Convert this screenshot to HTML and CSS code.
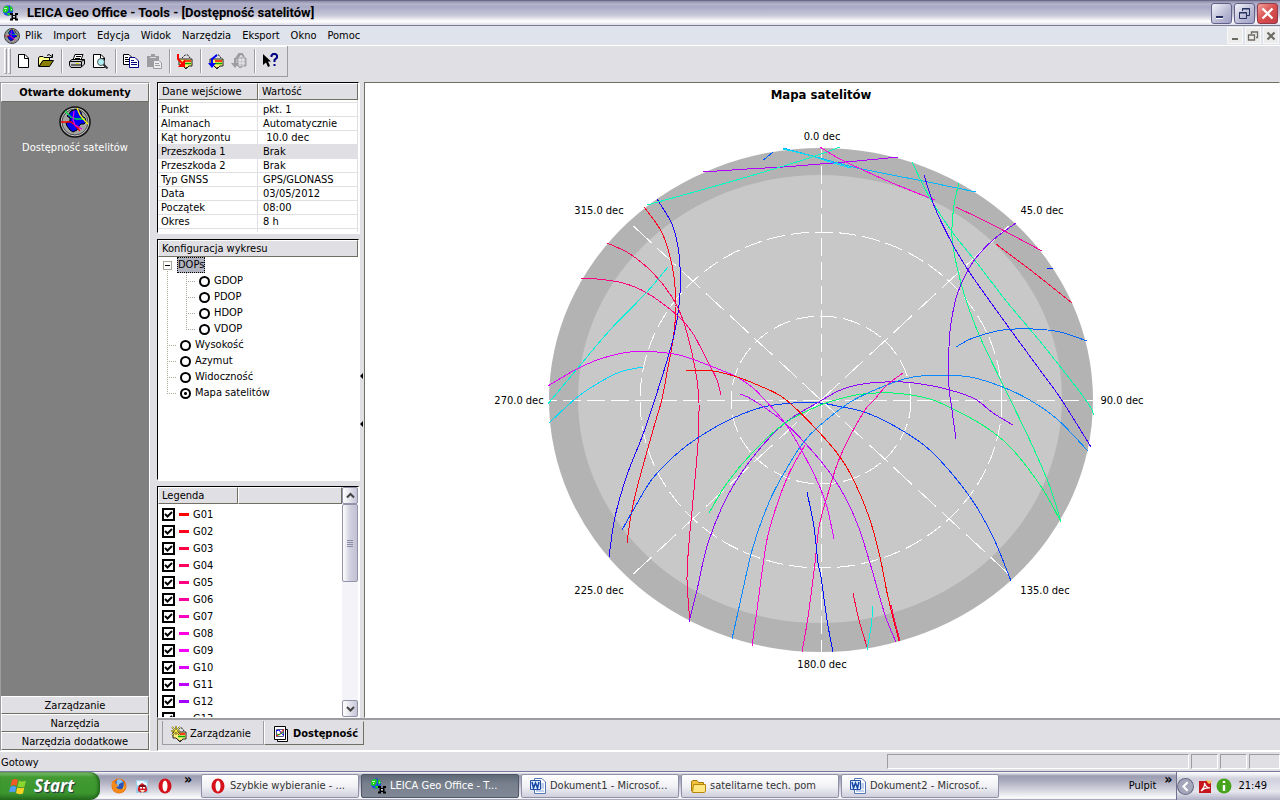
FILE: index.html
```html
<!DOCTYPE html>
<html lang="pl">
<head>
<meta charset="utf-8">
<title>LEICA Geo Office - Tools - [Dostępność satelitów]</title>
<link rel="stylesheet" href="styles.css">
</head>
<body>
<svg class="defs" width="0" height="0" aria-hidden="true">
  <symbol id="i-globe" viewBox="0 0 16 16">
    <circle cx="6" cy="5.500" r="5.200" fill="#1d4fe0"/>
    <path d="M1 4L3 1H6L7 3L6 6L4 8L1 7ZM8 1L10 2L11 5L9 7L8 5ZM5 8H8L8 10L6 11Z" fill="#1ed01e"/>
    <path d="M2 3.500H5M3 5.500H4M9 4.500H10" stroke="#c9ffc9" fill="none"/>
    <path d="M8 8H11V10H13V8H16V10H14.500V13.500H16V15.500H13V14H11V15.500H8V13.500H9.500V10H8Z" fill="#000"/>
    <path d="M11 11H13V12.500H11Z" fill="#dde"/>
  </symbol>
  <symbol id="i-sky" viewBox="0 0 32 32">
    <circle cx="16" cy="16" r="15" fill="#c8c8c8" stroke="#111" stroke-width="1.500"/>
    <circle cx="16" cy="16" r="13" fill="#a4a4a4" stroke="#333" stroke-width=".8"/>
    <path d="M10 8L12 5L15 4L18 3L22 6L23 10L26 12L27 16L25 18L22 18L20 20L18 24L14 26L11 24L8 20L7 17L11 15L11 12L8 10Z" fill="#0000f8" stroke="#000"/>
    <path d="M2 16L12 16L16 19L21 25" fill="none" stroke="#f00" stroke-width="1.300"/>
    <path d="M6 5L12 11L17 13L26 13" fill="none" stroke="#00e040" stroke-width="1.300"/>
    <path d="M15 5L14 14L16 19L23 23" fill="none" stroke="#e000e0" stroke-width="1.300"/>
    <path d="M18 2L21 9L26 15L29 18" fill="none" stroke="#ff0" stroke-width="1.300"/>
  </symbol>
  <symbol id="i-box" viewBox="0 0 16 16">
    <path d="M2 6H15V13H12L9 16L5 12H2Z" fill="#fff176" stroke="#222"/>
    <path d="M5 5L8 2H11L13 5M6 13L9 15L12 13" fill="none" stroke="#222" stroke-dasharray="2 1"/>
    <path d="M7 8H14" stroke="#f00" stroke-width="1.500"/><path d="M7 10.500H14" stroke="#0a0" stroke-width="1.500"/>
  </symbol>
  <symbol id="i-opera" viewBox="0 0 16 16">
    <ellipse cx="8" cy="8" rx="6.500" ry="7.500" fill="#d5121b"/><ellipse cx="8" cy="8" rx="2.500" ry="5.500" fill="#fff"/>
  </symbol>
  <symbol id="i-word" viewBox="0 0 16 16">
    <path d="M4.500.5H12L15.500 4V15.500H4.500Z" fill="#fff" stroke="#5677b5"/><path d="M11 6H14M11 8H14M11 10H14M6 13H14" stroke="#83a0d5"/>
    <path d="M.5 2.500H10.500V11.500H.5Z" fill="#dce8fc" stroke="#2451a5"/><path d="M2 4L3.500 10L5.500 5L7.500 10L9 4" fill="none" stroke="#1747a6" stroke-width="1.500"/>
  </symbol>
</svg>

<header class="titlebar">
  <svg class="ico16"><use href="#i-globe"/></svg>
  <h1>LEICA Geo Office - Tools - [Dostępność satelitów]</h1>
  <div class="winbtns">
    <button class="wb" aria-label="Minimalizuj"><svg viewBox="0 0 19 19"><path d="M4 12H11V15H4Z" fill="#fff"/><path d="M4 12H11V14H4Z" fill="#253060"/></svg></button>
    <button class="wb" aria-label="Przywróć"><svg viewBox="0 0 19 19"><path d="M7.500 7V4.500H14.500V11.500H12M7 5H15M4.500 8.500H11.500V14.500H4.500ZM4 9H12" fill="none" stroke="#253060"/></svg></button>
    <button class="wb close" aria-label="Zamknij"><svg viewBox="0 0 19 19"><path d="M4.500 4.500L14.500 14.500M14.500 4.500L4.500 14.500" stroke="#fff" stroke-width="2.400"/></svg></button>
  </div>
</header>

<nav class="menubar">
  <svg class="ico16 menu-ico"><use href="#i-sky"/></svg>
  <button>Plik</button><button>Import</button><button>Edycja</button><button>Widok</button><button>Narzędzia</button><button>Eksport</button><button>Okno</button><button>Pomoc</button>
  <div class="mdibtns">
    <button class="mb" aria-label="Minimalizuj dokument"><svg viewBox="0 0 14 14"><path d="M4 10H10" stroke="#6b6a62" stroke-width="2"/></svg></button>
    <button class="mb" aria-label="Przywróć dokument"><svg viewBox="0 0 14 14"><path d="M5.500 5V3H11.500V8.500H10M5 3H12M2.500 6H8.500V11H2.500ZM2 6H9" fill="none" stroke="#6b6a62" stroke-width="1.300"/></svg></button>
    <button class="mb" aria-label="Zamknij dokument"><svg viewBox="0 0 14 14"><path d="M3.500 3.500L10.500 10.500M10.500 3.500L3.500 10.500" stroke="#6b6a62" stroke-width="2.200"/></svg></button>
  </div>
</nav>

<div class="toolrow">
  <div class="toolbar">
    <span class="grip"></span><span class="grip"></span>
    <button class="tb" aria-label="Nowy"><svg viewBox="0 0 16 16"><path d="M3.500 1.500H10L13.500 5V14.500H3.500Z" fill="#fff" stroke="#000"/><path d="M9.500 1.500V5.500H13.500" fill="none" stroke="#000"/></svg></button>
    <button class="tb" aria-label="Otwórz"><svg viewBox="0 0 16 16"><path d="M.5 13.500V4.500L2 3.500H5L6 4.500H11.500V7.500H5L1 13.500" fill="#ffff8c" stroke="#000"/><path d="M1 13.500L5 7.500H15.500L11.500 13.500Z" fill="#8a8000" stroke="#000"/><path d="M9 2.500L11 1.500L14 3.500M14.500 1V4.500H11" fill="none" stroke="#000"/></svg></button>
    <span class="sep"></span>
    <button class="tb" aria-label="Drukuj"><svg viewBox="0 0 16 16"><path d="M4 7L6 1.500H14L12 7Z" fill="#fff" stroke="#000"/><path d="M7 3.500H12M6 5.500H11" stroke="#000"/><path d="M.5 8.500L3 6.500H15.500V11L12 14.500H2L.5 12.500Z" fill="#ccc" stroke="#000"/><path d="M1 8.500H12L15 7M12.500 9V14M2 12H12" stroke="#000" fill="none"/><path d="M7 10.500H10" stroke="#dd0"/></svg></button>
    <button class="tb" aria-label="Podgląd wydruku"><svg viewBox="0 0 16 16"><path d="M1.500 1.500H9L12.500 5V14.500H1.500Z" fill="#fff" stroke="#000"/><path d="M8.500 1.500V5.500H12.500" fill="none" stroke="#000"/><circle cx="9" cy="9" r="3.500" fill="#aeeef5" stroke="#555"/><path d="M11.500 11.500L15.500 15.500" stroke="#333" stroke-width="2"/></svg></button>
    <span class="sep"></span>
    <button class="tb" aria-label="Kopiuj"><svg viewBox="0 0 16 16"><path d="M.5 1.500H6L8.500 4V11.500H.5Z" fill="#fff" stroke="#000"/><path d="M2 4.500H5M2 6.500H6M2 8.500H6" stroke="#000"/><path d="M6.500 4.500H12L15.500 8V14.500H6.500Z" fill="#fff" stroke="#000080"/><path d="M8 7.500H11M8 9.500H14M8 11.500H14" stroke="#000080"/></svg></button>
    <button class="tb" aria-label="Wklej" disabled><svg viewBox="0 0 16 16"><path d="M1 3H5V1H9V3H13V14H1Z" fill="#9d9da1"/><path d="M4 4.500H10" stroke="#ddd"/><path d="M7.500 7.500H13L15.500 10V15.500H7.500Z" fill="#eee" stroke="#9d9da1"/><path d="M9 10.500H13M9 12.500H14" stroke="#9d9da1"/></svg></button>
    <span class="sep"></span>
    <button class="tb" aria-label="Importuj dane"><svg viewBox="0 0 16 16"><use href="#i-box"/><path d="M1 1V6L5 10" fill="none" stroke="#f00" stroke-width="2"/><path d="M8 6V14H1Z" fill="#f00"/></svg></button>
    <span class="sep"></span>
    <button class="tb" aria-label="Eksportuj dane"><svg viewBox="0 0 16 16"><use href="#i-box"/><path d="M9 2L4 6V11" fill="none" stroke="#00f" stroke-width="2"/><path d="M0 10H8L4 15Z" fill="#00f"/></svg></button>
    <button class="tb" aria-label="Eksportuj raport" disabled><svg viewBox="0 0 16 16"><path d="M6 5H15V13H12L9 15L6 12Z" fill="#b5b4ba" stroke="#9d9da1"/><path d="M7 7H14M7 10H14M9 5V13M12 5V13" stroke="#eee"/><path d="M9 2L4 6V11M6 4L8 1H11L13 4" fill="none" stroke="#9d9da1" stroke-width="2"/><path d="M0 10H8L4 15Z" fill="#9d9da1"/></svg></button>
    <span class="sep"></span>
    <button class="tb" aria-label="Pomoc kontekstowa"><svg viewBox="0 0 16 16"><path d="M1 1V12L4 9.500L6 14L8 13L6 8.500H9Z" fill="#000"/><path d="M9.500 4V2.500L11 1H13.500L15 2.500V4.500L12.500 7V9M12.500 11V13" fill="none" stroke="#000084" stroke-width="2"/></svg></button>
  </div>
</div>

<main class="work">
  <aside class="outlook">
    <button class="bar active">Otwarte dokumenty</button>
    <a class="doc" href="#mapa"><svg class="ico32"><use href="#i-sky"/></svg>Dostępność satelitów</a>
    <button class="bar">Zarządzanie</button>
    <button class="bar">Narzędzia</button>
    <button class="bar">Narzędzia dodatkowe</button>
  </aside>

  <section class="view">
    <div class="panes">
      <div class="left">
        <div class="panel inputs">
          <table>
            <thead><tr><th>Dane wejściowe</th><th>Wartość</th></tr></thead>
            <tbody>
              <tr class="gap"><td></td><td></td></tr>
              <tr><td>Punkt</td><td>pkt. 1</td></tr>
              <tr><td>Almanach</td><td>Automatycznie</td></tr>
              <tr><td>Kąt horyzontu</td><td>&nbsp;10.0 dec</td></tr>
              <tr class="sel"><td>Przeszkoda 1</td><td>Brak</td></tr>
              <tr><td>Przeszkoda 2</td><td>Brak</td></tr>
              <tr><td>Typ GNSS</td><td>GPS/GLONASS</td></tr>
              <tr><td>Data</td><td>03/05/2012</td></tr>
              <tr><td>Początek</td><td>08:00</td></tr>
              <tr><td>Okres</td><td>8 h</td></tr>
              <tr class="last"><td></td><td></td></tr>
            </tbody>
          </table>
        </div>

        <div class="panel config">
          <h2 class="hd">Konfiguracja wykresu</h2>
          <ul class="tree">
            <li class="root"><button class="minus" aria-label="Zwiń"></button><span class="dops">DOPs</span>
            </li>
            <li>
              <ul class="sub">
                <li><label><input type="radio" name="plot">GDOP</label></li>
                <li><label><input type="radio" name="plot">PDOP</label></li>
                <li><label><input type="radio" name="plot">HDOP</label></li>
                <li><label><input type="radio" name="plot">VDOP</label></li>
              </ul>
            </li>
            <li class="leaf"><label><input type="radio" name="plot">Wysokość</label></li>
            <li class="leaf"><label><input type="radio" name="plot">Azymut</label></li>
            <li class="leaf"><label><input type="radio" name="plot">Widoczność</label></li>
            <li class="leaf"><label><input type="radio" name="plot" checked>Mapa satelitów</label></li>
          </ul>
        </div>

        <div class="panel legend">
          <div class="legend-main">
            <div class="legend-head"><span class="hd">Legenda</span><span class="hd"></span></div>
            <ul id="legend"></ul>
          </div>
          <div class="scroll">
            <button aria-label="W górę"><svg viewBox="0 0 9 9"><path d="M1 6.500L4.500 3L8 6.500" fill="none" stroke="#444" stroke-width="2"/></svg></button>
            <span class="thumb"></span>
            <button class="down" aria-label="W dół"><svg viewBox="0 0 9 9"><path d="M1 3L4.500 6.500L8 3" fill="none" stroke="#444" stroke-width="2"/></svg></button>
          </div>
        </div>
      </div>

      <div class="splitter"><svg viewBox="0 0 5 60"><path d="M4 3V9L1 6ZM4 51V57L1 54Z"/></svg></div>

      <div class="chart" id="mapa">
        <svg viewBox="365 83 914 634" role="img" aria-label="Mapa satelitów">
          <ellipse cx="821" cy="400" rx="272" ry="252" fill="#b3b3b3"/>
          <ellipse cx="820" cy="399" rx="242" ry="224" fill="#c8c8c8"/>
          <g class="grid">
            <ellipse cx="821" cy="400" rx="181" ry="168"/>
            <ellipse cx="821" cy="400" rx="90" ry="84"/>
            <path d="M821 400V148M821 400V652M821 400H549M821 400H1093"/>
            <path class="diag" d="M821 400L629 222M821 400L1013 222M821 400L629 578M821 400L1013 578"/>
          </g>
          <g id="tracks" class="tracks"></g>
          <g class="labels">
            <text class="title" x="821" y="99">Mapa satelitów</text>
            <text x="822" y="140">0.0 dec</text>
            <text x="1042" y="214">45.0 dec</text>
            <text x="1122" y="404">90.0 dec</text>
            <text x="1045" y="594">135.0 dec</text>
            <text x="822" y="668">180.0 dec</text>
            <text x="599" y="594">225.0 dec</text>
            <text x="519" y="404">270.0 dec</text>
            <text x="599" y="214">315.0 dec</text>
          </g>
        </svg>
      </div>
    </div>

    <div class="tabs">
      <button class="tab"><svg class="ico16" viewBox="0 0 16 16"><use href="#i-box"/><path d="M1 1L9 9M9 1L1 9M5 0V9M0 5H9" stroke="#222" stroke-width="1.500"/><path d="M1 1L9 9M9 1L1 9M5 0V9M0 5H9" stroke="#ffef3a"/></svg>Zarządzanie</button>
      <button class="tab on"><svg class="ico16" viewBox="0 0 16 16"><path d="M4.500 3.500H14.500V15.500H4.500Z" fill="#fff" stroke="#000"/><path d="M1.500.5H12.500V13.500H1.500Z" fill="#fff" stroke="#000"/><path d="M3.500 3.500H10.500V10.500H3.500Z" fill="#fff" stroke="#558"/><path d="M3 5L6 4L9 8L11 9" fill="none" stroke="#00f"/><path d="M3 10L7 8L11 3" fill="none" stroke="#f00"/><path d="M4 8L6 9L10 6" fill="none" stroke="#0a0"/></svg>Dostępność</button>
    </div>
  </section>
</main>

<footer class="status">
  <span class="msg">Gotowy</span><span class="cell wide"></span><span class="cell"></span><span class="cell"></span><span class="cell end"></span>
</footer>

<div class="taskbar">
  <button class="start"><svg viewBox="0 0 18 18"><path d="M3 3Q6 1 9 3L7.500 9Q5 7 1.500 9Z" fill="#f15a24"/><path d="M10 3.500Q13 5.500 17 3.500L15.500 9.500Q12 11 8.500 9.500Z" fill="#8cd62e"/><path d="M1.300 10Q4 8 7.300 10L6 15.500Q3 14 0 15.500Z" fill="#4f9cf5"/><path d="M8.300 10.500Q12 12 15.300 10.500L14 16.500Q10 18 7 16Z" fill="#fdd021"/></svg>Start</button>
  <div class="quick">
    <button aria-label="Firefox"><svg class="ico16" viewBox="0 0 16 16"><circle cx="8" cy="8" r="7.500" fill="#e8700c"/><circle cx="8.500" cy="7" r="5" fill="#2b55b8"/><path d="M6 2Q10 0 12 4L10 5Q7 6 8 8L5 9Z" fill="#87c5f0"/><path d="M1 3Q4 3 5 6Q7 6 7 8L5 9Q7 12 11 11Q14 9 13 4Q17 9 13 13Q8 17 3 13Q0 9 1 3Z" fill="#f58a1a"/><path d="M12 4Q15 9 11 12Q14 8 12 4Z" fill="#ffd74a"/></svg></button>
    <button aria-label="Gra"><svg class="ico16" viewBox="0 0 16 16"><path d="M2 2H14V15H2Z" fill="#9ed0e8"/><path d="M3 3H9L13 5V8L3 7Z" fill="#e8f6ff"/><path d="M4 13Q3 8 8 5Q14 8 13 13Q8 16 4 13Z" fill="#d0202c"/><path d="M6 12H11L8.500 15Z" fill="#f5e3bd"/><path d="M5 8H12" stroke="#300"/><path d="M6 9H8V10.500H6ZM9 9H11V10.500H9Z" fill="#fff"/></svg></button>
    <button aria-label="Opera"><svg class="ico16"><use href="#i-opera"/></svg></button>
    <span class="chev">»</span>
  </div>
  <div class="tasks">
    <button class="task"><svg class="ico16"><use href="#i-opera"/></svg><span>Szybkie wybieranie - ...</span></button>
    <button class="task cur"><svg class="ico16"><use href="#i-globe"/></svg><span>LEICA Geo Office - T...</span></button>
    <button class="task"><svg class="ico16"><use href="#i-word"/></svg><span>Dokument1 - Microsof...</span></button>
    <button class="task"><svg class="ico16" viewBox="0 0 16 16"><path d="M1.500 13V3.500L3 2.500H7L8.500 4.500H13.500V13Z" fill="#f0c23c" stroke="#a87808"/><path d="M3.500 6.500H15.500V13L14.500 14.500H2.500Z" fill="#ffe680" stroke="#b4860c"/></svg><span>satelitarne tech. pom</span></button>
    <button class="task"><svg class="ico16"><use href="#i-word"/></svg><span>Dokument2 - Microsof...</span></button>
  </div>
  <span class="desk">Pulpit</span><span class="chev">»</span>
  <div class="tray">
    <button class="expand" aria-label="Pokaż ukryte ikony"><svg viewBox="0 0 16 16"><circle cx="8" cy="8" r="7.500" fill="#a5a6bb" stroke="#6c6d85"/><path d="M10 4L6 8L10 12" fill="none" stroke="#fff" stroke-width="2"/></svg></button>
    <svg class="tri" viewBox="0 0 16 16"><path d="M2 3H14V15H2Z" fill="#c4161c"/><path d="M4 13Q8 9 7.500 5Q9 10 13 10Q8 9 4 13Z" fill="none" stroke="#fff" stroke-width="1.200"/><path d="M10 1L12 3L15 2L14 5L12 6L10 4Z" fill="#f6bd5a"/></svg>
    <svg class="tri" viewBox="0 0 16 16"><circle cx="8" cy="8" r="7.500" fill="#46a41c"/><path d="M8 3V5M8 7V13" stroke="#fff" stroke-width="2.400"/></svg>
    <time>21:49</time>
  </div>
</div>
<script src="tracks.js"></script>
</body>
</html>
```
FILE: styles.css
```css
* { box-sizing: border-box; }
:root {
  --face: #e0dfe3;
  --shadow: #9d9da1;
  --dark: #716f64;
  --ui: "DejaVu Sans Condensed", "Noto Sans", sans-serif;
}
html, body { height: 100%; }
body {
  margin: 0;
  display: flex;
  flex-direction: column;
  background: var(--face);
  color: #000;
  font: 11px/14px var(--ui);
  overflow: hidden;
}
button { font: inherit; color: inherit; border: 0; padding: 0; margin: 0; background: none; white-space: nowrap; }
button svg { display: block; }
h1, h2, ul { margin: 0; padding: 0; list-style: none; font: inherit; }
svg { display: block; flex: none; }
.defs { position: absolute; }
.ico16 { width: 16px; height: 16px; }
.ico32 { width: 32px; height: 32px; }

.titlebar {
  flex: none;
  height: 26px;
  display: flex;
  align-items: center;
  gap: 9px;
  padding: 0 2px;
  border-top: 1px solid #6a6a88;
  border-bottom: 1px solid #7c7c98;
  background: linear-gradient(#8c8ca8, #b4b4cc 12%, #a9a9c4 25%, #c9c9da 60%, #fff 85%, #dcdce6);
}
.titlebar h1 { flex: 1; font: bold 13px/18px Roboto, sans-serif; }
.winbtns { display: flex; gap: 2px; }
.wb {
  width: 21px; height: 21px;
  border: 1px solid #61618a; border-radius: 3px;
  background: linear-gradient(135deg, #f4f4fb, #b9b9d4 60%, #9f9fc4);
}
.wb.close { background: linear-gradient(135deg, #f0a09a, #d9504f 50%, #c23c44); border-color: #93394c; }

.menubar {
  flex: none;
  height: 19px;
  display: flex;
  align-items: center;
  gap: 11px;
  padding-left: 4px;
  background: #dfe3eb;
}
.menu-ico { margin-right: -6px; }
.mdibtns { margin-left: auto; display: flex; gap: 2px; padding-right: 1px; }
.mb { width: 16px; height: 17px; background: #ececec; border: 1px solid #f8f8f8; }
.mb svg { width: 14px; height: 14px; }

.toolrow { flex: none; height: 37px; border-top: 1px solid #fff; }
.toolbar {
  width: 288px; height: 31px;
  display: flex; align-items: center;
  padding-left: 4px;
  border: solid var(--shadow); border-width: 0 1px 1px 0;
  box-shadow: inset 0 1px #fff;
}
.grip { width: 3px; height: 26px; margin-right: 1px; border: 1px solid; border-color: #fff var(--shadow) var(--shadow) #fff; }
.tb { width: 23px; height: 22px; padding: 3px; }
.tb svg { width: 16px; height: 16px; }
.sep { width: 2px; height: 24px; margin: 0 3px; border-left: 1px solid var(--shadow); border-right: 1px solid #fff; }

.work { flex: 1; min-height: 0; display: flex; gap: 7px; }
.outlook {
  width: 150px; display: flex; flex-direction: column;
  background: #808080;
  border: 1px solid; border-color: var(--shadow) #fff #fff var(--shadow);
}
.bar {
  height: 18px; padding-top: 1px; background: var(--face);
  border: 1px solid; border-color: #fff var(--dark) var(--dark) #fff;
}
.bar.active { height: 19px; font-weight: bold; }
.doc {
  flex: 1; display: flex; flex-direction: column; align-items: center; gap: 3px;
  padding-top: 4px; color: #fff; text-decoration: none;
}

.view { flex: 1; min-width: 0; display: flex; flex-direction: column; }
.panes { flex: 1; min-height: 0; display: flex; }
.left { width: 202px; display: grid; grid-template-rows: 151px 241px minmax(0, 1fr); gap: 6px; }
.panel {
  background: #fff; overflow: hidden;
  border: 1px solid; border-color: #000 #fff #fff #000;
  box-shadow: 1px 1px #fff;
}
.hd, .inputs th {
  height: 17px; background: var(--face); font-weight: normal; text-align: left;
  border: 1px solid; border-color: #fff var(--dark) var(--dark) #fff;
}
.hd { padding: 1px 3px; }
table { width: 100%; border-collapse: separate; border-spacing: 0; table-layout: fixed; }
th:first-child { width: 100px; }
.inputs th { padding: 0 3px; }
td { height: 14px; line-height: 13px; padding: 0 3px; border-right: 1px solid var(--face); border-bottom: 1px solid var(--face); white-space: nowrap; }
td + td { padding-left: 5px; }
.gap td { height: 3px; }
.last td { height: 20px; border-bottom: 0; }
.sel td { background: var(--face); }

.tree {
  margin: 0 0 0 4px;
  background: repeating-linear-gradient(#aca899 0 1px, transparent 1px 2px) 5px 8px / 1px 129px no-repeat;
}
.tree li { min-height: 16px; }
.tree label { display: flex; align-items: center; gap: 4px; height: 16px; }
.root { display: flex; align-items: center; height: 16px; }
.minus { width: 9px; height: 9px; margin: 0 5px 0 1px; border: 1px solid #aca899; background: linear-gradient(#000, #000) center / 5px 1px no-repeat #fff; }
.dops { background: #b2b4bf; outline: 1px dotted #000; outline-offset: -1px; padding: 1px; line-height: 14px; }
.sub { margin-left: 24px; background: repeating-linear-gradient(#aca899 0 1px, transparent 1px 2px) 0 0 / 1px 56px no-repeat; }
.sub label::before, .leaf label::before { content: ""; width: 9px; border-bottom: 1px dotted #aca899; }
.leaf label { padding-left: 5px; }
input { appearance: none; margin: 0; flex: none; border: 2px solid #000; background: #fff; }
input[type=radio] { width: 11px; height: 11px; border-radius: 50%; }
input[type=radio]:checked { background: radial-gradient(circle, #000 0 1px, #fff 2px); }
input[type=checkbox] { width: 13px; height: 13px; }
input[type=checkbox]:checked { background: url("data:image/svg+xml,%3Csvg xmlns='http://www.w3.org/2000/svg' viewBox='0 0 9 9'%3E%3Cpath d='M1 4L3.500 6.500L8 2' fill='none' stroke='%23000' stroke-width='2'/%3E%3C/svg%3E"); }

.legend { display: flex; }
.legend-main { flex: 1; min-width: 0; }
.legend-head { display: flex; }
.legend-head .hd { width: 80px; }
.legend-head .hd + .hd { flex: 1; }
#legend { padding: 2px 0 0 4px; }
#legend label { display: flex; align-items: center; gap: 4px; height: 17px; }
.swatch { width: 10px; height: 3px; }
.scroll { width: 16px; display: flex; flex-direction: column; background: #f3f3f8; }
.scroll button, .thumb { border: 1px solid #9293a8; border-radius: 2px; background: linear-gradient(90deg, #fff, #c5c5d8); }
.scroll button { height: 17px; display: grid; place-items: center; }
.scroll svg { width: 9px; height: 9px; }
.scroll .thumb {
  height: 78px;
  background: repeating-linear-gradient(#8b8ca5 0 1px, transparent 1px 2px) center / 6px 7px no-repeat, linear-gradient(90deg, #fff, #d0d0df 50%, #c1c1d4);
}
.scroll .down { margin-top: auto; }
.splitter { width: 5px; display: flex; align-items: center; }
.splitter svg { width: 5px; height: 60px; }
.chart {
  flex: 1; min-width: 0; background: #fff;
  border: 1px solid; border-color: var(--dark) #fff #fff var(--dark);
}
.chart svg { width: 100%; height: 100%; }
.grid { fill: none; stroke: #fff; stroke-dasharray: 18 6; shape-rendering: crispEdges; }
.diag { stroke-dasharray: 25 8; }
.tracks { fill: none; shape-rendering: crispEdges; }
.labels { font: 11px var(--ui); text-anchor: middle; }
.labels .title { font-weight: bold; font-size: 13px; }

.tabs {
  flex: none; height: 33px; display: flex; align-items: flex-start;
  padding: 1px 4px; border-left: 1px solid var(--dark); border-top: 2px solid var(--shadow); border-bottom: 1px solid #fff;
}
.tab {
  height: 24px; width: 102px; display: flex; align-items: center; gap: 3px; padding: 2px 0 0 8px;
  border: 1px solid var(--shadow); border-top: 0;
}
.tab.on { width: 100px; gap: 4px; font-weight: bold; border: 1px solid; border-color: var(--face) var(--dark) var(--dark) #fff; }

.status { flex: none; height: 20px; display: flex; align-items: stretch; gap: 2px; border-top: 1px solid #fff; padding: 2px 0; }
.msg { flex: 1; padding: 2px 1px; }
.cell { width: 27px; border: 1px solid; border-color: var(--shadow) #fff #fff var(--shadow); }
.cell.wide { width: 302px; }
.cell.end { width: 31px; }

.taskbar {
  flex: none; height: 29px; display: flex; align-items: center;
  border-top: 1px solid #7777a0;
  background: linear-gradient(#fff, #9c9cb2 14%, #a9a9bc 30%, #e2e2ea 75%, #fff 94%, #8888a4);
}
.start {
  width: 100px; height: 28px; display: flex; align-items: center; gap: 7px; padding-left: 9px;
  border-radius: 0 10px 10px 0;
  color: #fff; font: italic bold 17px/20px "Open Sans", sans-serif;
  text-shadow: 1px 1px 1px #234;
  background: linear-gradient(#8ec87c, #429a32 18%, #3b962e 75%, #256b1d);
  box-shadow: inset -2px 0 3px #22641c;
}
.start svg { width: 18px; height: 18px; }
.quick { width: 101px; height: 28px; display: flex; align-items: center; gap: 7px; padding-left: 11px; }
.chev { font: bold 14px/14px var(--ui); align-self: flex-start; }
.quick .chev { margin-left: 4px; }
.tasks { flex: 1; min-width: 0; display: flex; gap: 2px; }
.task {
  flex: 0 1 158px; min-width: 0; height: 24px; display: flex; align-items: center; gap: 4px; padding: 0 8px;
  color: #333; overflow: hidden;
  border: 1px solid #8f8fa8; border-radius: 2px;
  background: linear-gradient(#fff, #f2f2f6 50%, #cfcfdd);
}
.task.cur { color: #fff; background: linear-gradient(#5f6876, #77808c 40%, #7f8894); border-color: #4f5866; }
.desk { padding-right: 8px; }
.tray {
  height: 28px; display: flex; align-items: center; gap: 3px; margin-left: 4px; padding-right: 13px;
  background: linear-gradient(#fff, #d0d0de 25%, #e6e6ee 70%, #b0b0c6);
  border-left: 1px solid #70708e;
}
.expand svg { width: 17px; height: 17px; }
.tri { width: 16px; height: 16px; }
.tray time { margin-left: 3px; }
```
FILE: tracks.js
```javascript
const legend = [
  ['G01', '#ff0000'], ['G02', '#ff001e'], ['G03', '#ff0040'], ['G04', '#ff0060'],
  ['G05', '#ff0080'], ['G06', '#ff00a0'], ['G07', '#ff00c0'], ['G08', '#ff00e0'],
  ['G09', '#f800ff'], ['G10', '#e000ff'], ['G11', '#c000ff'], ['G12', '#a000ff'],
  ['G13', '#8000ff']
];
document.getElementById('legend').innerHTML = legend.map(([name, color]) =>
  `<li><label><input type="checkbox" checked><span class="swatch" style="background:${color}"></span>${name}</label></li>`).join('');

const tracks = [
  ['#ff0020', '644,207 660,229 668,249 674,277 676,307 673,340 668,367 662,399 655,423 646,455 637,488 631,515 627,543'],
  ['#2000ff', '657,199 672,224 678,247 680,267 680,293 677,320 671,347 655,399 642,437 627,475 615,517 609,557'],
  ['#ff0060', '607,243 630,254 653,273 672,297 683,320 692,353 697,380 699,403 698,443 694,490 689,543 687,580 690,622'],
  ['#ff0080', '581,278 597,279 623,283 647,293 677,315 692,332 708,362 717,380 721,395'],
  ['#00f0d8', '668,267 646,293 610,330 577,369 552,399 548,404'],
  ['#00d8ff', '643,367 620,372 595,385 575,399 549,423'],
  ['#0a40ff', '622,530 635,507 653,478 680,451 707,432 733,418 763,407 793,403 820,403 837,406 867,413 903,431 933,453 970,497 993,537 1011,581'],
  ['#9000ff', '689,622 697,590 708,543 727,497 753,457 785,423 817,403 843,389 870,383 903,382 927,385 950,390 975,399 993,413 1013,425'],
  ['#00ff70', '709,513 727,483 753,452 785,423 818,406 843,398 863,394 893,393 930,399 963,414 990,430 1013,450 1042,488 1061,522'],
  ['#0a88ff', '732,639 740,603 753,547 770,500 787,468 803,443 818,427 852,401 892,383 913,377 937,375 970,377 1000,386 1028,399 1057,419 1088,451'],
  ['#ff00d0', '752,646 757,610 764,558 770,527 787,478 805,445'],
  ['#ff00b0', '802,652 808,617 815,563 819,527 827,497 840,457 863,413 875,399 887,385 903,373'],
  ['#e000ff', '548,386 575,370 600,359 630,352 657,352 683,356 713,367 737,377 753,388 764,399 785,423 803,453 819,485 827,507 834,539'],
  ['#ff0000', '685,370 713,371 737,377 760,386 785,399 818,431 840,457 855,483 870,520 880,557 888,597 899,641'],
  ['#c000ff', '740,394 753,400 785,423 820,460 840,488 857,523 870,563 885,615 896,642'],
  ['#0010ff', '807,492 814,527 818,563 821,577 827,620 833,652'],
  ['#ff0040', '853,593 859,620 867,647'],
  ['#00f0e0', '873,606 871,627 867,650'],
  ['#ff0060', '891,605 895,622 900,641'],
  ['#b000ff', '703,172 747,169 783,167 820,164 857,161 898,157'],
  ['#00b8ff', '783,148 820,158 853,167 887,174 923,181 976,192'],
  ['#00e0ff', '783,149 812,156 830,162 851,168'],
  ['#00ffc0', '647,205 687,194 740,179 787,165 818,155 840,147'],
  ['#0060ff', '763,160 767,157 773,152'],
  ['#ff00e0', '820,147 838,158 863,170 897,185 935,200'],
  ['#00ff88', '959,183 954,205 952,237 957,267 965,297 980,337 1010,399 1033,447 1050,487 1061,522'],
  ['#00ffa0', '912,162 930,198 953,233 977,263 1007,302 1043,345 1085,399 1094,415'],
  ['#4000ff', '924,175 935,208 953,245 970,273 1007,325 1040,370 1061,399 1091,447'],
  ['#8000ff', '1016,223 993,240 973,262 958,292 951,323 949,347 949,387 951,403 956,439'],
  ['#ff00a0', '956,207 993,225 1042,251'],
  ['#ff0040', '996,244 1033,272 1072,303'],
  ['#0020ff', '1047,269 1053,268'],
  ['#0068ff', '956,347 973,338 1003,330 1033,329 1060,332 1087,341']
];

// Catmull-Rom spline through the sampled positions of one satellite
function smooth(points) {
  const p = points.split(' ').map(s => s.split(',').map(Number));
  let d = `M${p[0]}`;
  for (let i = 0; i < p.length - 1; i++) {
    const a = p[i - 1] || p[i], b = p[i], c = p[i + 1], e = p[i + 2] || c;
    const c1 = [b[0] + (c[0] - a[0]) / 6, b[1] + (c[1] - a[1]) / 6];
    const c2 = [c[0] - (e[0] - b[0]) / 6, c[1] - (e[1] - b[1]) / 6];
    d += `C${c1} ${c2} ${c}`;
  }
  return d;
}
document.getElementById('tracks').innerHTML =
  tracks.map(([color, pts]) => `<path stroke="${color}" d="${smooth(pts)}"/>`).join('');
```
